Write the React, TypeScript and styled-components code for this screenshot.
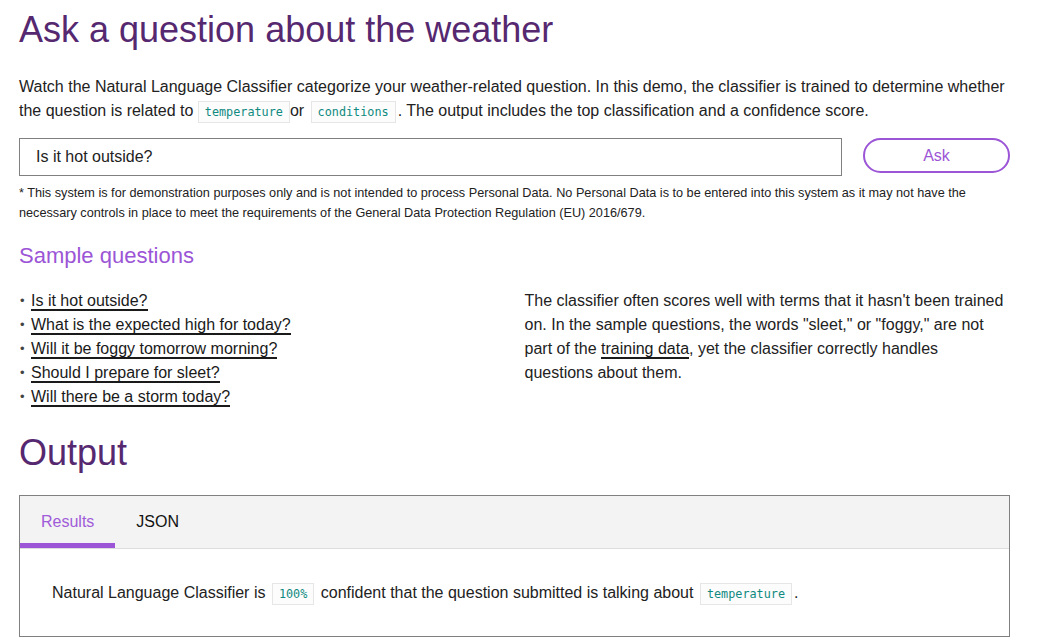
import styled, { createGlobalStyle } from 'styled-components'
import { useState } from 'react'

const GlobalStyle = createGlobalStyle`
  html, body {
    margin: 0;
    padding: 0;
    background: #ffffff;
  }
  body {
    font-family: "Liberation Sans", Arial, sans-serif;
    color: #222222;
  }
`

const Page = styled.main`
  width: 991px;
  padding: 6px 0 0 19px;
`

const Title = styled.h1`
  margin: 0;
  font-size: 36px;
  line-height: 48px;
  font-weight: 400;
  color: #55286f;
`

const Intro = styled.p`
  margin: 21px 0 0;
  font-size: 16px;
  line-height: 24px;
`

const Code = styled.code<{ $gap?: number }>`
  display: inline-block;
  font-family: "DejaVu Sans Mono", "Liberation Mono", monospace;
  font-size: 11.8px;
  line-height: 20px;
  color: #0f8a80;
  background: #fcfcfc;
  border: 1px solid #e6e6e6;
  padding: 0 6px;
  margin: 0 ${p => p.$gap ?? 0}px;
`

const AskRow = styled.form`
  display: flex;
  align-items: flex-start;
  gap: 21px;
  margin-top: 15px;
`

const QuestionInput = styled.input`
  flex: 1;
  height: 38px;
  box-sizing: border-box;
  border: 1px solid #808080;
  padding: 0 16px;
  font-family: "Liberation Sans", Arial, sans-serif;
  font-size: 16px;
  color: #222222;
  outline: none;
`

const AskButton = styled.button`
  width: 147px;
  height: 35px;
  box-sizing: border-box;
  border: 2px solid #9b55d6;
  border-radius: 18px;
  background: #ffffff;
  color: #9b55d6;
  font-family: "Liberation Sans", Arial, sans-serif;
  font-size: 16px;
  cursor: pointer;
`

const Disclaimer = styled.p`
  margin: 7px 0 0;
  font-size: 12.7px;
  line-height: 20px;
  color: #222222;
`

const SubTitle = styled.h2`
  margin: 17px 0 0;
  font-size: 22px;
  line-height: 32px;
  font-weight: 400;
  color: #9b55d6;
`

const Samples = styled.div`
  display: grid;
  grid-template-columns: 1fr 1fr;
  gap: 20px;
  margin-top: 17px;
`

const QuestionList = styled.ul`
  list-style: none;
  margin: 0;
  padding: 0;
`

const QuestionItem = styled.li`
  position: relative;
  padding-left: 12px;
  font-size: 16px;
  line-height: 24px;

  &::before {
    content: "•";
    position: absolute;
    left: 1px;
    top: 0;
    color: #444444;
    font-size: 13px;
  }
`

const Link = styled.a`
  color: #1a1a1a;
  text-decoration: none;
  border-bottom: 2px solid #1a1a1a;
  cursor: pointer;
`

const Note = styled.p`
  margin: 0;
  font-size: 16px;
  line-height: 24px;
  color: #222222;
`

const Output = styled.h2`
  margin: 20px 0 0;
  font-size: 36px;
  line-height: 48px;
  font-weight: 400;
  color: #55286f;
`

const Panel = styled.section`
  margin-top: 18px;
  border: 1px solid #808080;
`

const TabBar = styled.div`
  display: flex;
  height: 52px;
  background: #f3f3f3;
  border-bottom: 1px solid #dddddd;
`

const Tab = styled.button<{ $active?: boolean }>`
  border: 0;
  background: transparent;
  padding: 0 21px;
  font-family: "Liberation Sans", Arial, sans-serif;
  font-size: 16px;
  color: ${p => (p.$active ? '#a05bd9' : '#111111')};
  box-shadow: ${p => (p.$active ? 'inset 0 -5px 0 #9b55d6' : 'none')};
  cursor: pointer;
`

const ResultBody = styled.div`
  padding: 32px 32px 31px;
  font-size: 16px;
  line-height: 24px;
`

const questions = [
  'Is it hot outside?',
  'What is the expected high for today?',
  'Will it be foggy tomorrow morning?',
  'Should I prepare for sleet?',
  'Will there be a storm today?',
]

export default function App() {
  const [question, setQuestion] = useState('Is it hot outside?')
  const [tab, setTab] = useState<'results' | 'json'>('results')

  return (
    <Page>
      <GlobalStyle />
      <Title>Ask a question about the weather</Title>
      <Intro>
        Watch the Natural Language Classifier categorize your weather-related question. In this demo, the classifier is trained to determine whether the question is related to <Code>temperature</Code>or <Code $gap={2}>conditions</Code>. The output includes the top classification and a confidence score.
      </Intro>

      <AskRow onSubmit={e => e.preventDefault()}>
        <QuestionInput value={question} onChange={e => setQuestion(e.target.value)} />
        <AskButton type="submit">Ask</AskButton>
      </AskRow>
      <Disclaimer>
        * This system is for demonstration purposes only and is not intended to process Personal Data. No Personal Data is to be entered into this system as it may not have the necessary controls in place to meet the requirements of the General Data Protection Regulation (EU) 2016/679.
      </Disclaimer>

      <SubTitle>Sample questions</SubTitle>
      <Samples>
        <QuestionList>
          {questions.map(q => (
            <QuestionItem key={q}>
              <Link onClick={() => setQuestion(q)}>{q}</Link>
            </QuestionItem>
          ))}
        </QuestionList>
        <Note>
          The classifier often scores well with terms that it hasn't been trained on. In the sample questions, the words "sleet," or "foggy," are not part of the <Link>training data</Link>, yet the classifier correctly handles questions about them.
        </Note>
      </Samples>

      <Output>Output</Output>
      <Panel>
        <TabBar>
          <Tab $active={tab === 'results'} onClick={() => setTab('results')}>Results</Tab>
          <Tab $active={tab === 'json'} onClick={() => setTab('json')}>JSON</Tab>
        </TabBar>
        <ResultBody>
          Natural Language Classifier is <Code $gap={2}>100%</Code> confident that the question submitted is talking about <Code $gap={2}>temperature</Code>.
        </ResultBody>
      </Panel>
    </Page>
  )
}
